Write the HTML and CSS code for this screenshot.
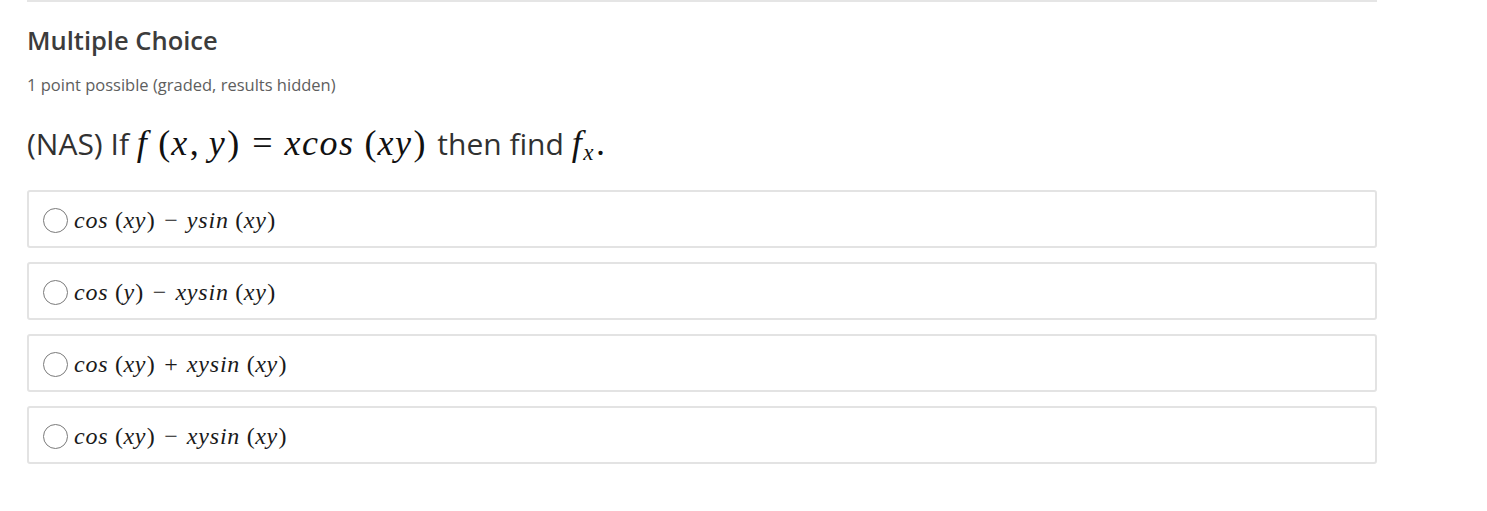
FILE: index.html
```html
<!DOCTYPE html>
<html>
<head>
<meta charset="utf-8">
<link rel="stylesheet" href="styles.css">
</head>
<body>
<div class="problem">
  <h2 class="title">Multiple Choice</h2>
  <div class="meta">1 point possible (graded, results hidden)</div>
  <p class="question">(NAS) If <span class="m"><i>f</i><span class="op"> </span><span class="up">(</span><i>x</i><span class="up">,</span> <i>y</i><span class="up">)</span><span class="rel">=</span><i>xcos</i><span class="op"> </span><span class="up">(</span><i>xy</i><span class="up">)</span></span> <span class="word">then find</span> <span class="m"><i>f</i><sub><i>x</i></sub><span class="up">.</span></span></p>
  <div class="choices">
    <label class="choice"><span class="radio"></span><span class="m sm"><i>cos</i> <span class="up">(</span><i>xy</i><span class="up">)</span><span class="bin">−</span><i>ysin</i> <span class="up">(</span><i>xy</i><span class="up">)</span></span></label>
    <label class="choice"><span class="radio"></span><span class="m sm"><i>cos</i> <span class="up">(</span><i>y</i><span class="up">)</span><span class="bin">−</span><i>xysin</i> <span class="up">(</span><i>xy</i><span class="up">)</span></span></label>
    <label class="choice"><span class="radio"></span><span class="m sm"><i>cos</i> <span class="up">(</span><i>xy</i><span class="up">)</span><span class="bin">+</span><i>xysin</i> <span class="up">(</span><i>xy</i><span class="up">)</span></span></label>
    <label class="choice"><span class="radio"></span><span class="m sm"><i>cos</i> <span class="up">(</span><i>xy</i><span class="up">)</span><span class="bin">−</span><i>xysin</i> <span class="up">(</span><i>xy</i><span class="up">)</span></span></label>
  </div>
</div>
</body>
</html>
```
FILE: styles.css
```css
html, body {
  margin: 0;
  padding: 0;
  background: #fff;
}
body {
  font-family: "Open Sans", "Noto Sans", sans-serif;
  color: #313131;
}
.problem {
  width: 1350px;
  margin-left: 27px;
  border-top: 2px solid #e5e5e5;
  margin-top: 0;
}
.title {
  margin: 21px 0 0;
  font-size: 25.5px;
  font-weight: 600;
  color: #3c3c3c;
  line-height: 34px;
}
.meta {
  margin-top: 18px;
  font-size: 16.5px;
  color: #5e5e5e;
  line-height: 20px;
}
.question {
  margin: 28px 0 0;
  font-size: 30px;
  line-height: 40px;
  color: #313131;
}
.question .word {
  margin-left: 3px;
}
.m {
  font-family: "Liberation Serif", "DejaVu Serif", serif;
  font-size: 36px;
  color: #111;
}
.m i {
  font-style: italic;
  letter-spacing: 1.5px;
}
.m .up {
  font-style: normal;
  margin: 0 1px;
}
.m .rel {
  margin: 0 12px;
  font-style: normal;
}
.m .bin {
  margin: 0 9px;
  font-style: normal;
}
.m sub {
  font-size: 23px;
  vertical-align: -5px;
}
.choices {
  margin-top: 17px;
  display: flex;
  flex-direction: column;
  gap: 14px;
}
.choice {
  display: flex;
  align-items: center;
  height: 54px;
  border: 2px solid #e3e3e3;
  border-radius: 3px;
  padding-left: 14px;
}
.radio {
  width: 23px;
  height: 23px;
  border: 1.5px solid #7a7a7a;
  border-radius: 50%;
  margin-right: 6px;
  margin-top: 2px;
  flex: none;
}
.m.sm {
  font-size: 24px;
  color: #1a1a1a;
  margin-top: 2px;
}
.m.sm i {
  letter-spacing: 0.8px;
}
.m.sm .up {
  margin: 0 0.5px;
}
```
